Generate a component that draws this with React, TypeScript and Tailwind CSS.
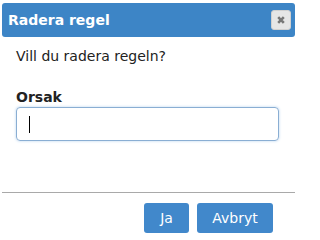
import React from "react";

export default function App() {
  return (
    <div
      className="w-[297px] h-[239px] bg-white relative overflow-hidden"
      style={{ fontFamily: '"DejaVu Sans", Verdana, sans-serif' }}
    >
      <div className="pt-[3px] px-[2px]">
        <div className="h-[34px] rounded-[3px] bg-[#3d85c6] flex items-center justify-between pl-[6px] pr-[4px]">
          <span className="text-white font-bold text-[14px] leading-[17px]">Radera regel</span>
          <button className="w-[20px] h-[20px] rounded-[3px] bg-[#e6e6e6] border border-[#d0d0d0] flex items-center justify-center">
            <svg width="10" height="10" viewBox="0 0 10 10">
              <path d="M2.2 2.2 L7.8 7.8 M7.8 2.2 L2.2 7.8" stroke="#777" strokeWidth="2.6" strokeLinecap="butt" />
            </svg>
          </button>
        </div>
      </div>
      <div className="px-[16px]">
        <p className="mt-[11px] text-[14px] leading-[17px] text-[#222]">Vill du radera regeln?</p>
        <p className="mt-[24px] text-[14px] leading-[17px] font-bold text-[#222]">Orsak</p>
        <div className="mt-[1px] w-[263px] h-[34px] rounded-[4px] border border-[#8aaed3] shadow-[0_0_3px_#b7d3ee] flex items-center pl-[12px]">
          <span className="block w-[1px] h-[17px] bg-black" />
        </div>
      </div>
      <div className="mt-[51px] mx-[2px] h-[1px] bg-[#a9a9a9]" />
      <div className="mt-[10px] flex justify-end gap-[8px] pr-[24px]">
        <button className="w-[45px] h-[30px] rounded-[3px] bg-[#4188cb] text-white text-[14px] leading-[17px] flex items-center justify-center">
          Ja
        </button>
        <button className="w-[76px] h-[30px] rounded-[3px] bg-[#4188cb] text-white text-[14px] leading-[17px] flex items-center justify-center">
          Avbryt
        </button>
      </div>
    </div>
  );
}
